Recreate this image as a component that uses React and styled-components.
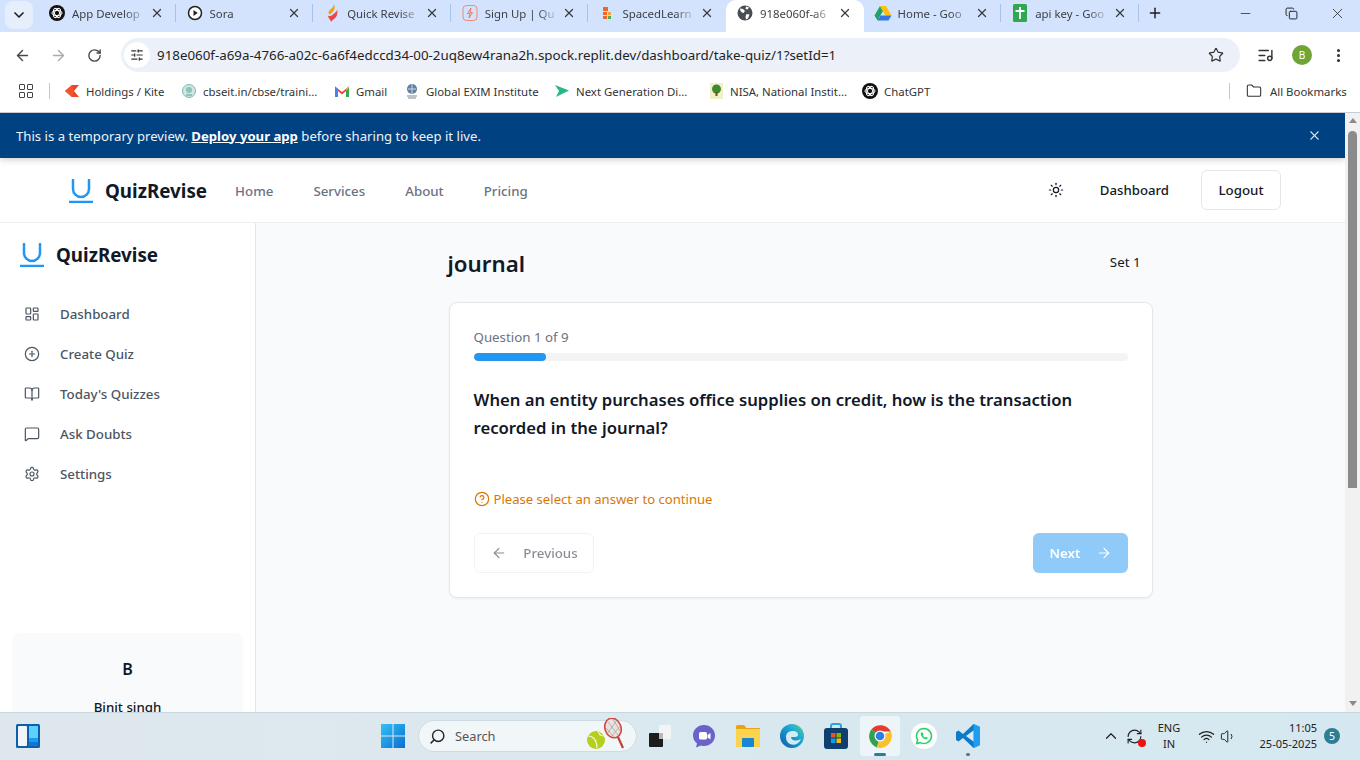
import React from "react";
import styled, { createGlobalStyle } from "styled-components";
import {
  ArrowLeft,
  ArrowRight,
  BookOpen,
  ChevronDown,
  ChevronUp,
  CircleHelp,
  CirclePlus,
  Copy,
  Folder,
  LayoutDashboard,
  ListMusic,
  MessageSquare,
  Minus,
  MoreVertical,
  Plus,
  RefreshCw,
  RotateCw,
  Search,
  Settings,
  SlidersHorizontal,
  Star,
  Sun,
  Volume1,
  Wifi,
  X,
} from "lucide-react";

const GlobalStyle = createGlobalStyle`
  html, body {
    margin: 0;
    padding: 0;
    width: 1360px;
    height: 760px;
    overflow: hidden;
    background: #fff;
  }
  * { box-sizing: border-box; }
`;

const chromeFont = `"Noto Sans", "Open Sans", sans-serif`;
const pageFont = `"Noto Sans", "Open Sans", sans-serif`;

/* favicons */
const GptIcon = ({ size = 16 }) => (
  <svg width={size} height={size} viewBox="0 0 16 16">
    <circle cx="8" cy="8" r="8" fill="#111" />
    <g fill="none" stroke="#fff" strokeWidth="1">
      <ellipse cx="8" cy="8" rx="5" ry="2.6" />
      <ellipse cx="8" cy="8" rx="5" ry="2.6" transform="rotate(60 8 8)" />
      <ellipse cx="8" cy="8" rx="5" ry="2.6" transform="rotate(120 8 8)" />
    </g>
  </svg>
);
const SoraIcon = () => (
  <svg width="16" height="16" viewBox="0 0 16 16">
    <circle cx="8" cy="8" r="6.5" fill="#fff" stroke="#222" strokeWidth="1.5" />
    <path d="M6.5 5l4.2 3-4.2 3z" fill="#222" />
  </svg>
);
const FlameIcon = () => (
  <svg width="16" height="18" viewBox="0 0 16 18">
    <path d="M9.5 0C10.5 3 7 4.5 5 7c-1 1.4-.6 3 1 3.5l3-3c1-1 1.5-2.5 1.5-3.5C11 2.5 10.5 1 9.5 0z" fill="#f59e0b" />
    <path d="M13 5c.5 2-1.5 3.5-4 5.5-2 1.6-4 2-5 1 0 2.5 2 3 3 6.5 1-2 5-3.5 6-7 .6-2.2.5-4.5 0-6z" fill="#ef4444" />
  </svg>
);
const BoltIcon = () => (
  <svg width="16" height="16" viewBox="0 0 16 16" fill="none">
    <rect x="1" y="0.5" width="14" height="15" rx="3.5" stroke="#f08a6c" />
    <path d="M9 3L5.5 8.5H8L7 13l3.5-5.5H8z" stroke="#e9735a" strokeWidth="0.9" />
  </svg>
);
const SpacedIcon = () => (
  <svg width="14" height="14" viewBox="0 0 14 14">
    <rect x="3" y="1" width="5" height="4" fill="#f26522" />
    <rect x="3" y="6" width="4" height="3" fill="#f26522" />
    <rect x="8" y="6" width="3" height="3" fill="#f8a23b" />
    <rect x="3" y="10" width="4" height="3" fill="#f26522" />
    <rect x="8" y="10" width="3" height="3" fill="#4caf50" />
  </svg>
);
const GlobeIcon = () => (
  <svg width="16" height="16" viewBox="0 0 16 16">
    <circle cx="8" cy="8" r="7.5" fill="#4a4d52" />
    <path d="M3 3.5l3 .5 2 2-1.5 2L5 7.5 3.5 6zM9.5 9l3 .5L11 13.5 9 14.5l-.5-3zM9 1.5l3 1-1.5 2-2-.5z" fill="#fff" />
  </svg>
);
const DriveIcon = () => (
  <svg width="18" height="16" viewBox="0 0 18 16">
    <path d="M6 1L0.5 10.5l3 5L9 6z" fill="#1fa463" />
    <path d="M6 1h6l5.5 9.5h-6z" fill="#ffc107" />
    <path d="M3.5 15.5h11l3-5H6.5z" fill="#3777e3" />
  </svg>
);
const SheetIcon = () => (
  <svg width="14" height="18" viewBox="0 0 14 18">
    <rect width="14" height="18" rx="1.5" fill="#2fa84f" />
    <path d="M2.5 7h9M7 3v12" stroke="#fff" strokeWidth="1.8" />
  </svg>
);
const KiteIcon = () => (
  <svg width="16" height="12" viewBox="0 0 16 12">
    <path d="M8 0l7 0-5 6 5 6H8L1 6z" fill="#e8472a" />
    <path d="M8 0L1 6l7 6 2-6z" fill="#f4532f" />
  </svg>
);
const CbseIcon = () => (
  <svg width="14" height="16" viewBox="0 0 14 16">
    <circle cx="7" cy="8" r="6.5" fill="#cfe6e2" stroke="#7fb8ae" />
    <circle cx="7" cy="7" r="3" fill="#8cc4b8" />
    <path d="M4 12h6" stroke="#5a9c90" />
  </svg>
);
const GmailIcon = () => (
  <svg width="16" height="12" viewBox="0 0 16 12">
    <path d="M1 12V1.5L8 7l7-5.5V12h-3V6L8 9.5 4 6v6z" fill="#ea4335" />
    <path d="M1 12V1.5L4 4v8z" fill="#4285f4" />
    <path d="M15 12V1.5L12 4v8z" fill="#34a853" />
    <path d="M12 4l3-2.5V3l-3 2.5z" fill="#fbbc04" />
  </svg>
);
const EximIcon = () => (
  <svg width="12" height="16" viewBox="0 0 12 16">
    <circle cx="6" cy="6" r="5" fill="#5f7fa3" />
    <path d="M2 6h8M6 1v10" stroke="#cfd9e5" />
    <path d="M1 13h10M2 15h8" stroke="#7b8794" />
  </svg>
);
const NextGenIcon = () => (
  <svg width="16" height="12" viewBox="0 0 16 12">
    <path d="M1 0l14 5.5L2 12l3-6z" fill="#2ab58a" />
  </svg>
);
const NisaIcon = () => (
  <svg width="13" height="16" viewBox="0 0 13 16">
    <rect width="13" height="16" fill="#f3efc9" />
    <circle cx="6.5" cy="6" r="4.5" fill="#3d8b2f" />
    <rect x="5.5" y="9" width="2" height="4" fill="#7a4b1f" />
  </svg>
);

/* taskbar artwork */
const WidgetsIcon = () => (
  <svg width="24" height="24" viewBox="0 0 24 24">
    <rect width="24" height="24" rx="1.5" fill="#0d5fae" />
    <rect x="2" y="2" width="9" height="20" rx="1" fill="#f2f5f8" />
    <rect x="13" y="2" width="9" height="12" fill="#5cd0ff" />
    <rect x="13" y="14" width="9" height="4" fill="#1e9bf0" />
    <rect x="13" y="18" width="9" height="4" fill="#0a78d8" />
  </svg>
);
const WinLogo = () => (
  <svg width="24" height="24" viewBox="0 0 24 24">
    <defs>
      <linearGradient id="win" x1="0" y1="0" x2="1" y2="1">
        <stop offset="0" stopColor="#33c1f4" />
        <stop offset="1" stopColor="#0a6fd1" />
      </linearGradient>
    </defs>
    <path d="M0 0h11.5v11.5H0zM12.5 0H24v11.5H12.5zM0 12.5h11.5V24H0zM12.5 12.5H24V24H12.5z" fill="url(#win)" />
  </svg>
);
const TaskViewIcon = () => (
  <svg width="24" height="24" viewBox="0 0 24 24">
    <rect x="11" y="1" width="12" height="14" rx="1" fill="#f4f4f4" />
    <rect x="1" y="9" width="14" height="14" rx="1" fill="#1d1d1d" />
    <rect x="11" y="9" width="4" height="6" fill="#b8b8b8" />
  </svg>
);
const TeamsIcon = () => (
  <svg width="24" height="24" viewBox="0 0 24 24">
    <path d="M12 1c6 0 11 4.5 11 10.5S18 22 12 22c-1 0-2 0-3-.5L4 23.5l1-4C2.5 17.5 1 14.5 1 11.5 1 5.5 6 1 12 1z" fill="#6b62c9" />
    <rect x="7" y="8" width="8" height="7.5" rx="1.5" fill="#fff" />
    <path d="M15.5 11l3-2v6.5l-3-2z" fill="#fff" />
  </svg>
);
const FolderIcon = () => (
  <svg width="24" height="24" viewBox="0 0 24 24">
    <path d="M0 2.5A1.5 1.5 0 0 1 1.5 1H8l2.5 3H24v19H0z" fill="#e8a317" />
    <rect y="5" width="24" height="18" fill="#fcd34d" />
    <rect x="6" y="14" width="12" height="9" rx="1" fill="#1787d4" />
  </svg>
);
const EdgeIcon = () => (
  <svg width="24" height="24" viewBox="0 0 24 24">
    <defs>
      <linearGradient id="edge" x1="0" y1="1" x2="1" y2="0">
        <stop offset="0" stopColor="#0c59a4" />
        <stop offset="0.6" stopColor="#1aa5d8" />
        <stop offset="1" stopColor="#5fd38a" />
      </linearGradient>
    </defs>
    <circle cx="12" cy="12" r="12" fill="url(#edge)" />
    <path d="M6 13c0-4 3-6 7-6 3 0 5 1.5 5 4 0 1.5-1.5 2-4 2h-3c0 3 4 5 10 2-2 5-7 7-11 5-3-1.5-4-4-4-7z" fill="#e8f4fa" opacity="0.9" />
  </svg>
);
const StoreIcon = () => (
  <svg width="24" height="26" viewBox="0 0 24 26">
    <path d="M7 6V3a2 2 0 0 1 2-2h6a2 2 0 0 1 2 2v3" fill="none" stroke="#2aa5e0" strokeWidth="2" />
    <rect y="5" width="24" height="21" rx="3" fill="#0f3f6e" />
    <rect x="7" y="10" width="4.5" height="4.5" fill="#f25022" />
    <rect x="12.5" y="10" width="4.5" height="4.5" fill="#7fba00" />
    <rect x="7" y="15.5" width="4.5" height="4.5" fill="#00a4ef" />
    <rect x="12.5" y="15.5" width="4.5" height="4.5" fill="#ffb900" />
  </svg>
);
const ChromeIcon = () => (
  <svg width="24" height="24" viewBox="0 0 24 24">
    <path d="M12 12L3.3 5.5A12 12 0 0 1 23 7.5H12z" fill="#e33b2e" />
    <path d="M12 12L3.3 5.5A12 12 0 0 0 9 23.6z" fill="#2fa14f" />
    <path d="M12 12l11-4.5A12 12 0 0 1 9 23.6z" fill="#fbc02d" />
    <circle cx="12" cy="12" r="5.5" fill="#fff" />
    <circle cx="12" cy="12" r="4.3" fill="#2f7de1" />
  </svg>
);
const WhatsappIcon = () => (
  <svg width="26" height="26" viewBox="0 0 26 26">
    <circle cx="13" cy="13" r="13" fill="#fff" />
    <path d="M13 5.5a7.5 7.5 0 0 0-6.4 11.4L5.7 20.5l3.7-.9A7.5 7.5 0 1 0 13 5.5z" fill="none" stroke="#25d366" strokeWidth="1.6" />
    <path d="M10.3 9.5c-.8.8-.8 2.2.4 3.900 1.200 1.700 3 3 4.500 2.900 1-.1 1.600-.8 1.600-1.500l-1.800-1-.8.8c-.9-.3-1.900-1.300-2.300-2.300l.7-.8-.9-2z" fill="#25d366" />
  </svg>
);
const VsCodeIcon = () => (
  <svg width="24" height="24" viewBox="0 0 24 24">
    <path d="M17.5 0L24 3v18l-6.5 3L7 14l-4.500 3.500L0 16v-8l2.500-1.500L7 10z" fill="#0f7bc6" />
    <path d="M17.5 0L24 3v18l-6.5 3V0z" fill="#1f9cf0" />
    <path d="M17.5 6.5L10 12l7.500 5.500z" fill="#e4f2fb" opacity="0.95" />
  </svg>
);
const TennisArt = () => (
  <svg width="42" height="32" viewBox="0 0 42 32">
    <circle cx="9" cy="22" r="9" fill="#b5cf1e" />
    <path d="M1 18c5 0 9 4 9 12M17 18c-4 0-6-3-6-7" fill="none" stroke="#eef5c5" strokeWidth="1.2" />
    <ellipse cx="26" cy="10" rx="8" ry="10" fill="#e8e2e0" stroke="#d2453f" strokeWidth="1.6" transform="rotate(-20 26 10)" />
    <path d="M21 4l10 13M26 1l7 12M19 10l9 10M30 2l-10 14M34 7l-10 12" stroke="#9a9090" strokeWidth="0.6" />
    <path d="M31 19l5 11" stroke="#c0403c" strokeWidth="2.2" />
  </svg>
);

const LogoMark = () => (
  <svg width="24" height="24" viewBox="0 0 24 24" fill="none" stroke="#2196f3" strokeWidth="2.5">
    <path d="M4 1v9a8 8 0 0 0 16 0V1" strokeLinecap="round" />
    <path d="M0 23h24" />
  </svg>
);

const tabs = [
  { title: "App Develop", icon: <GptIcon /> },
  { title: "Sora", icon: <SoraIcon /> },
  { title: "Quick Revise", icon: <FlameIcon /> },
  { title: "Sign Up | Qu", icon: <BoltIcon /> },
  { title: "SpacedLearn", icon: <SpacedIcon /> },
  { title: "918e060f-a6", icon: <GlobeIcon />, active: true },
  { title: "Home - Goo", icon: <DriveIcon /> },
  { title: "api key - Goo", icon: <SheetIcon /> },
];

const bookmarks = [
  { label: "Holdings / Kite", icon: <KiteIcon />, width: 117 },
  { label: "cbseit.in/cbse/traini...", icon: <CbseIcon />, width: 153 },
  { label: "Gmail", icon: <GmailIcon />, width: 70 },
  { label: "Global EXIM Institute", icon: <EximIcon />, width: 150 },
  { label: "Next Generation Di...", icon: <NextGenIcon />, width: 154 },
  { label: "NISA, National Instit...", icon: <NisaIcon />, width: 154 },
  { label: "ChatGPT", icon: <GptIcon />, width: 80 },
];

const menu = [
  { label: "Dashboard", icon: LayoutDashboard },
  { label: "Create Quiz", icon: CirclePlus },
  { label: "Today's Quizzes", icon: BookOpen },
  { label: "Ask Doubts", icon: MessageSquare },
  { label: "Settings", icon: Settings },
];

export default function App() {
  return (
    <Screen>
      <GlobalStyle />
      <TabStrip>
        <TabSearch>
          <ChevronDown size={16} strokeWidth={2.5} color="#1f1f1f" />
        </TabSearch>
        <TabList>
          {tabs.map((tab, i) => (
            <Tab key={tab.title} $active={tab.active} $divider={i < 4 || i === 6 || i === 7}>
              <TabIcon>{tab.icon}</TabIcon>
              <TabTitle>{tab.title}</TabTitle>
              <X size={14} strokeWidth={2.2} color="#3c3c3c" />
            </Tab>
          ))}
        </TabList>
        <NewTab>
          <Plus size={16} strokeWidth={2.2} color="#1f1f1f" />
        </NewTab>
        <WindowButtons>
          <WindowButton><Minus size={15} strokeWidth={1.2} /></WindowButton>
          <WindowButton><Copy size={13} strokeWidth={1.8} /></WindowButton>
          <WindowButton><X size={17} strokeWidth={1.1} /></WindowButton>
        </WindowButtons>
      </TabStrip>

      <Toolbar>
        <NavIcon><ArrowLeft size={17} color="#474747" strokeWidth={2} /></NavIcon>
        <NavIcon><ArrowRight size={17} color="#a9abae" strokeWidth={2} /></NavIcon>
        <NavIcon><RotateCw size={15} color="#474747" strokeWidth={2.2} /></NavIcon>
        <Omnibox>
          <SiteControls><SlidersHorizontal size={14} color="#333" strokeWidth={2} /></SiteControls>
          <UrlText>
            918e060f-a69a-4766-a02c-6a6f4edccd34-00-2uq8ew4rana2h.spock.replit.dev/dashboard/take-quiz/1?setId=1
          </UrlText>
          <Star size={16} color="#333" strokeWidth={1.8} />
        </Omnibox>
        <ToolbarRight>
          <ListMusic size={17} color="#333" strokeWidth={2} />
          <Avatar>B</Avatar>
          <MoreVertical size={17} color="#333" strokeWidth={2.4} />
        </ToolbarRight>
      </Toolbar>

      <BookmarkBar>
        <AppsGrid>
          <span /><span /><span /><span />
        </AppsGrid>
        <BarDivider />
        <BookmarkList>
          {bookmarks.map((b) => (
            <Bookmark key={b.label} $w={b.width}>
              <BookmarkIcon>{b.icon}</BookmarkIcon>
              {b.label}
            </Bookmark>
          ))}
        </BookmarkList>
        <BarDivider />
        <AllBookmarks>
          <Folder size={16} color="#333" strokeWidth={1.6} />
          All Bookmarks
        </AllBookmarks>
      </BookmarkBar>

      <Viewport>
        <Page>
          <Banner>
            <BannerText>
              This is a temporary preview. <BannerLink>Deploy your app</BannerLink> before sharing to keep it live.
            </BannerText>
            <X size={15} color="#d5e0ec" strokeWidth={1.8} />
          </Banner>

          <TopNav>
            <NavLeft>
              <Brand>
                <LogoMark />
                <BrandName>QuizRevise</BrandName>
              </Brand>
              <NavLinks>
                <NavLink>Home</NavLink>
                <NavLink>Services</NavLink>
                <NavLink>About</NavLink>
                <NavLink>Pricing</NavLink>
              </NavLinks>
            </NavLeft>
            <NavRight>
              <Sun size={16} color="#111827" strokeWidth={1.8} />
              <GhostLink>Dashboard</GhostLink>
              <LogoutButton>Logout</LogoutButton>
            </NavRight>
          </TopNav>

          <Body>
            <Sidebar>
              <SideBrand>
                <LogoMark />
                <BrandName>QuizRevise</BrandName>
              </SideBrand>
              <SideMenu>
                {menu.map(({ label, icon: Icon }) => (
                  <SideItem key={label}>
                    <Icon size={16} strokeWidth={1.8} />
                    {label}
                  </SideItem>
                ))}
              </SideMenu>
              <UserCard>
                <UserInitial>B</UserInitial>
                <UserName>Binit singh</UserName>
              </UserCard>
            </Sidebar>

            <Main>
              <QuizColumn>
                <QuizHead>
                  <QuizTitle>journal</QuizTitle>
                  <SetLabel>Set 1</SetLabel>
                </QuizHead>
                <Card>
                  <Progress>Question 1 of 9</Progress>
                  <Track>
                    <Fill style={{ width: `${(1 / 9) * 100}%` }} />
                  </Track>
                  <Question>
                    When an entity purchases office supplies on credit, how is the transaction recorded in the journal?
                  </Question>
                  <Warning>
                    <CircleHelp size={16} strokeWidth={1.8} />
                    Please select an answer to continue
                  </Warning>
                  <Actions>
                    <PrevButton>
                      <ArrowLeft size={16} strokeWidth={1.8} />
                      Previous
                    </PrevButton>
                    <NextButton>
                      Next
                      <ArrowRight size={16} strokeWidth={1.8} />
                    </NextButton>
                  </Actions>
                </Card>
              </QuizColumn>
            </Main>
          </Body>
        </Page>

        <Scrollbar>
          <ArrowUp />
          <Thumb />
          <ArrowDown />
        </Scrollbar>
      </Viewport>

      <Taskbar>
        <WidgetSlot><WidgetsIcon /></WidgetSlot>
        <TaskCenter>
          <TaskIcon $w={24}><WinLogo /></TaskIcon>
          <SearchPill>
            <Search size={17} color="#222" strokeWidth={2} style={{ transform: "scaleX(-1)" }} />
            <SearchLabel>Search</SearchLabel>
            <SearchArt><TennisArt /></SearchArt>
          </SearchPill>
          <TaskApps>
            <TaskIcon><TaskViewIcon /></TaskIcon>
            <TaskIcon><TeamsIcon /></TaskIcon>
            <TaskIcon><FolderIcon /></TaskIcon>
            <TaskIcon><EdgeIcon /></TaskIcon>
            <TaskIcon><StoreIcon /></TaskIcon>
            <TaskIcon $active $marker="#2d7d94" $mw={12}><ChromeIcon /></TaskIcon>
            <TaskIcon><WhatsappIcon /></TaskIcon>
            <TaskIcon $marker="#6a7175" $mw={4}><VsCodeIcon /></TaskIcon>
          </TaskApps>
        </TaskCenter>
        <Tray>
          <ChevronUp size={18} color="#222" strokeWidth={1.6} />
          <SyncSlot>
            <RefreshCw size={17} color="#222" strokeWidth={1.6} />
            <RedDot />
          </SyncSlot>
          <Lang>ENG<br />IN</Lang>
          <TrayIcons>
            <Wifi size={17} color="#222" strokeWidth={1.7} />
            <Volume1 size={17} color="#222" strokeWidth={1.4} />
          </TrayIcons>
          <Clock>11:05<br />25-05-2025</Clock>
          <Badge>5</Badge>
        </Tray>
      </Taskbar>
    </Screen>
  );
}

const Screen = styled.div`
  width: 1360px;
  height: 760px;
  display: flex;
  flex-direction: column;
  overflow: hidden;
  font-family: ${chromeFont};
`;

const TabStrip = styled.div`
  height: 32px;
  background: #d3e3fd;
  display: flex;
  align-items: stretch;
  padding-left: 5px;
  flex: none;
`;

const TabSearch = styled.div`
  width: 28px;
  height: 28px;
  margin-top: 1px;
  border-radius: 8px;
  background: #e6eefb;
  display: flex;
  align-items: center;
  justify-content: center;
`;

const TabList = styled.div`
  display: flex;
  margin-left: 5px;
`;

const Tab = styled.div`
  width: 137.6px;
  display: flex;
  align-items: center;
  padding: 0 12px 6px 10px;
  font-size: 11.4px;
  color: #3c3f43;
  position: relative;
  background: ${(p) => (p.$active ? "#fff" : "transparent")};
  border-radius: ${(p) => (p.$active ? "10px 10px 0 0" : "0")};
  &::after {
    content: "";
    display: ${(p) => (p.$divider ? "block" : "none")};
    position: absolute;
    right: 0;
    top: 4px;
    height: 18px;
    width: 1px;
    background: #a8c3e8;
  }
`;

const TabIcon = styled.span`
  width: 18px;
  height: 18px;
  display: flex;
  align-items: center;
  justify-content: center;
  flex: none;
`;

const TabTitle = styled.span`
  flex: 1;
  margin-left: 6px;
  white-space: nowrap;
  overflow: hidden;
  -webkit-mask-image: linear-gradient(90deg, #000 68%, transparent 96%);
  mask-image: linear-gradient(90deg, #000 68%, transparent 96%);
`;

const NewTab = styled.div`
  width: 34px;
  display: flex;
  align-items: center;
  justify-content: center;
  padding-bottom: 6px;
  margin-left: -1px;
`;

const WindowButtons = styled.div`
  margin-left: auto;
  display: flex;
`;

const WindowButton = styled.div`
  width: 46px;
  display: flex;
  align-items: center;
  justify-content: center;
  color: #222;
  padding-bottom: 6px;
`;

const Toolbar = styled.div`
  height: 40px;
  background: #fff;
  border-radius: 10px 10px 0 0;
  display: flex;
  align-items: center;
  padding: 6px 0 0 4px;
  flex: none;
`;

const NavIcon = styled.div`
  width: 36px;
  display: flex;
  justify-content: center;
`;

const Omnibox = styled.div`
  width: 1119px;
  height: 34px;
  margin-left: 9px;
  border-radius: 17px;
  background: #ebf0f9;
  display: flex;
  align-items: center;
  padding: 0 16px 0 3px;
`;

const SiteControls = styled.div`
  width: 26px;
  height: 26px;
  border-radius: 50%;
  background: #fff;
  display: flex;
  align-items: center;
  justify-content: center;
`;

const UrlText = styled.div`
  flex: 1;
  margin-left: 7px;
  font-size: 13.35px;
  color: #1f1f1f;
  white-space: nowrap;
`;

const ToolbarRight = styled.div`
  flex: 1;
  display: flex;
  align-items: center;
  padding: 0 13px 0 17px;
  justify-content: space-between;
`;

const Avatar = styled.div`
  width: 20px;
  height: 20px;
  border-radius: 50%;
  background: #6fa437;
  color: #fff;
  font-size: 10px;
  display: flex;
  align-items: center;
  justify-content: center;
`;

const BookmarkBar = styled.div`
  height: 40px;
  background: #fff;
  display: flex;
  align-items: center;
  padding: 0 0 2px 19px;
  flex: none;
`;

const AppsGrid = styled.div`
  width: 14px;
  height: 14px;
  display: grid;
  grid-template-columns: 6px 6px;
  gap: 2px;
  span {
    border: 1.5px solid #444;
    border-radius: 1px;
  }
`;

const BarDivider = styled.div`
  width: 1px;
  height: 16px;
  margin-left: 16px;
  background: #b6c9e6;
`;

const BookmarkList = styled.div`
  display: flex;
  width: 1163px;
  padding-left: 14px;
  font-size: 11.4px;
  color: #333;
`;

const Bookmark = styled.div`
  width: ${(p) => p.$w}px;
  display: flex;
  align-items: center;
  white-space: nowrap;
`;

const BookmarkIcon = styled.span`
  width: 16px;
  height: 16px;
  margin-right: 6px;
  display: flex;
  align-items: center;
  justify-content: center;
  flex: none;
`;

const AllBookmarks = styled.div`
  display: flex;
  align-items: center;
  gap: 8px;
  margin-left: 16px;
  font-size: 11.4px;
  color: #333;
  white-space: nowrap;
`;

const Viewport = styled.div`
  height: 600px;
  display: flex;
  flex: none;
  border-top: 1px solid #c9ccd0;
`;

const Page = styled.div`
  width: 1345px;
  display: flex;
  flex-direction: column;
  font-family: ${pageFont};
  overflow: hidden;
`;

const Banner = styled.div`
  height: 45px;
  background: #004182;
  color: #fff;
  display: flex;
  align-items: center;
  justify-content: space-between;
  padding: 0 23px 0 16px;
  box-shadow: 0 2px 6px rgba(0, 0, 0, 0.18);
  position: relative;
  flex: none;
`;

const BannerText = styled.div`
  font-size: 13.15px;
  font-weight: 400;
  color: #eef3f8;
`;

const BannerLink = styled.span`
  font-weight: 700;
  color: #fff;
  text-decoration: underline;
`;

const TopNav = styled.div`
  height: 65px;
  background: #fff;
  border-bottom: 1px solid #eceef1;
  display: flex;
  align-items: center;
  justify-content: space-between;
  padding: 0 64px 0 69px;
  flex: none;
`;

const NavLeft = styled.div`
  display: flex;
  align-items: center;
  gap: 28px;
  padding-top: 1px;
`;

const Brand = styled.div`
  display: flex;
  align-items: center;
  gap: 12px;
`;

const BrandName = styled.div`
  font-size: 18.8px;
  font-weight: 700;
  color: #111827;
`;

const NavLinks = styled.div`
  display: flex;
  gap: 40px;
`;

const NavLink = styled.span`
  font-size: 13.3px;
  font-weight: 500;
  color: #6b7280;
`;

const NavRight = styled.div`
  display: flex;
  align-items: center;
`;

const GhostLink = styled.span`
  font-size: 13.2px;
  font-weight: 500;
  color: #111827;
  margin: 0 32px 0 36px;
`;

const LogoutButton = styled.div`
  width: 80px;
  height: 40px;
  border: 1px solid #e5e7eb;
  border-radius: 6px;
  background: #fff;
  color: #111827;
  font-size: 13.3px;
  font-weight: 500;
  display: flex;
  align-items: center;
  justify-content: center;
`;

const Body = styled.div`
  flex: 1;
  display: flex;
  min-height: 0;
`;

const Sidebar = styled.aside`
  width: 256px;
  background: #fff;
  border-right: 1px solid #e5e7eb;
  display: flex;
  flex-direction: column;
  padding: 19px 12px 0;
  overflow: hidden;
  flex: none;
`;

const SideBrand = styled.div`
  display: flex;
  align-items: center;
  gap: 12px;
  padding-left: 8px;
`;

const SideMenu = styled.nav`
  margin-top: 26px;
  display: flex;
  flex-direction: column;
`;

const SideItem = styled.div`
  height: 40px;
  display: flex;
  align-items: center;
  gap: 20px;
  padding-left: 12px;
  font-size: 13.3px;
  font-weight: 500;
  color: #4b5563;
`;

const UserCard = styled.div`
  margin-top: 139px;
  width: 231px;
  height: 130px;
  border-radius: 8px;
  background: #f9fafb;
  padding-top: 26px;
  text-align: center;
  flex: none;
`;

const UserInitial = styled.div`
  font-size: 16px;
  font-weight: 600;
  color: #111827;
  line-height: 20px;
`;

const UserName = styled.div`
  margin-top: 18px;
  font-size: 13.3px;
  font-weight: 500;
  color: #111827;
  line-height: 20px;
`;

const Main = styled.main`
  flex: 1;
  background: #f9fafb;
  display: flex;
  justify-content: center;
  padding-top: 24px;
`;

const QuizColumn = styled.div`
  width: 704px;
`;

const QuizHead = styled.div`
  height: 33px;
  margin-bottom: 22px;
  display: flex;
  align-items: center;
  justify-content: space-between;
  padding-right: 12px;
  margin-left: -1px;
`;

const QuizTitle = styled.h1`
  margin: 0;
  font-size: 22.3px;
  font-weight: 600;
  color: #111827;
`;

const SetLabel = styled.span`
  font-size: 13.3px;
  color: #111827;
  padding-bottom: 4px;
`;

const Card = styled.section`
  height: 296px;
  background: #fff;
  border: 1px solid #e5e7eb;
  border-radius: 8px;
  box-shadow: 0 1px 2px rgba(0, 0, 0, 0.05);
  padding: 24px 24px 24px;
  display: flex;
  flex-direction: column;
`;

const Progress = styled.div`
  font-size: 13.3px;
  line-height: 20px;
  color: #6b7280;
`;

const Track = styled.div`
  height: 8px;
  margin-top: 6px;
  border-radius: 4px;
  background: #f3f4f6;
  overflow: hidden;
`;

const Fill = styled.div`
  height: 100%;
  background: #2196f3;
  border-radius: 4px;
`;

const Question = styled.h2`
  margin: 25px 0 0;
  font-size: 16.7px;
  line-height: 28px;
  font-weight: 600;
  color: #111827;
`;

const Warning = styled.div`
  margin-top: 47px;
  display: flex;
  align-items: center;
  gap: 4px;
  font-size: 13.1px;
  line-height: 20px;
  color: #d97706;
`;

const Actions = styled.div`
  margin-top: 24px;
  display: flex;
  justify-content: space-between;
`;

const PrevButton = styled.div`
  width: 120px;
  height: 40px;
  border: 1px solid #e5e7eb;
  border-radius: 6px;
  padding-left: 2px;
  display: flex;
  align-items: center;
  justify-content: center;
  gap: 16px;
  font-size: 13.3px;
  font-weight: 500;
  color: #111827;
  opacity: 0.5;
`;

const NextButton = styled.div`
  width: 95px;
  height: 40px;
  border-radius: 6px;
  padding-left: 2px;
  background: #2196f3;
  display: flex;
  align-items: center;
  justify-content: center;
  gap: 16px;
  font-size: 13.3px;
  font-weight: 600;
  color: #fff;
  opacity: 0.5;
`;

const Scrollbar = styled.div`
  width: 15px;
  background: #f1f1f1;
  display: flex;
  flex-direction: column;
  align-items: center;
  padding: 5px 0 6px;
`;

const ArrowUp = styled.div`
  width: 0;
  height: 0;
  border-left: 4.5px solid transparent;
  border-right: 4.5px solid transparent;
  border-bottom: 5px solid #8a8a8a;
  flex: none;
`;

const ArrowDown = styled(ArrowUp)`
  margin-top: auto;
  transform: rotate(180deg);
`;

const Thumb = styled.div`
  width: 9px;
  height: 357px;
  margin-top: 8px;
  border-radius: 5px 5px 0 0;
  background: #8b8b8b;
`;

const Taskbar = styled.div`
  height: 48px;
  flex: none;
  display: flex;
  align-items: center;
  padding-bottom: 1px;
  background: linear-gradient(90deg, #dfe7ee 0%, #dbe8ef 40%, #d5e8f1 100%);
  border-top: 1px solid #c8d6de;
`;

const WidgetSlot = styled.div`
  width: 381px;
  padding-left: 16px;
  display: flex;
  align-items: center;
  flex: none;
`;

const TaskCenter = styled.div`
  display: flex;
  align-items: center;
`;

const TaskIcon = styled.div`
  width: ${(p) => p.$w || 44}px;
  height: 40px;
  display: flex;
  align-items: center;
  justify-content: center;
  position: relative;
  &::before {
    content: "";
    display: ${(p) => (p.$active ? "block" : "none")};
    position: absolute;
    inset: 0 2px;
    background: rgba(255, 255, 255, 0.55);
    border-radius: 4px;
  }
  &::after {
    content: "";
    display: ${(p) => (p.$marker ? "block" : "none")};
    position: absolute;
    bottom: 0;
    left: 50%;
    width: ${(p) => p.$mw}px;
    margin-left: -${(p) => p.$mw / 2}px;
    height: 3px;
    border-radius: 2px;
    background: ${(p) => p.$marker};
  }
  svg {
    position: relative;
  }
`;

const SearchPill = styled.div`
  width: 219px;
  height: 32px;
  margin-left: 13px;
  border-radius: 16px;
  background: #f1f6f9;
  border: 1px solid #cfdbe2;
  display: flex;
  align-items: center;
  padding-left: 10px;
  position: relative;
`;

const SearchLabel = styled.span`
  margin-left: 9px;
  font-size: 12.8px;
  color: #555;
`;

const SearchArt = styled.div`
  position: absolute;
  right: 7px;
  top: -3px;
  height: 34px;
  overflow: hidden;
`;

const TaskApps = styled.div`
  display: flex;
  margin-left: 1px;
`;

const Tray = styled.div`
  flex: 1;
  display: flex;
  align-items: center;
  padding-left: 112px;
  color: #222;
`;

const SyncSlot = styled.div`
  position: relative;
  margin-left: 6px;
  display: flex;
  width: 20px;
`;

const RedDot = styled.span`
  position: absolute;
  right: 0;
  bottom: -2px;
  width: 8px;
  height: 8px;
  border-radius: 50%;
  background: #ee1111;
`;

const Lang = styled.div`
  width: 46px;
  font-size: 11px;
  line-height: 16px;
  text-align: center;
`;

const TrayIcons = styled.div`
  display: flex;
  gap: 5px;
  margin-left: 6px;
  width: 54px;
`;

const Clock = styled.div`
  width: 65px;
  text-align: right;
  font-size: 11px;
  line-height: 16px;
`;

const Badge = styled.div`
  width: 16px;
  height: 16px;
  margin-left: 7px;
  border-radius: 50%;
  background: #2d7d94;
  color: #fff;
  font-size: 10.5px;
  display: flex;
  align-items: center;
  justify-content: center;
`;
